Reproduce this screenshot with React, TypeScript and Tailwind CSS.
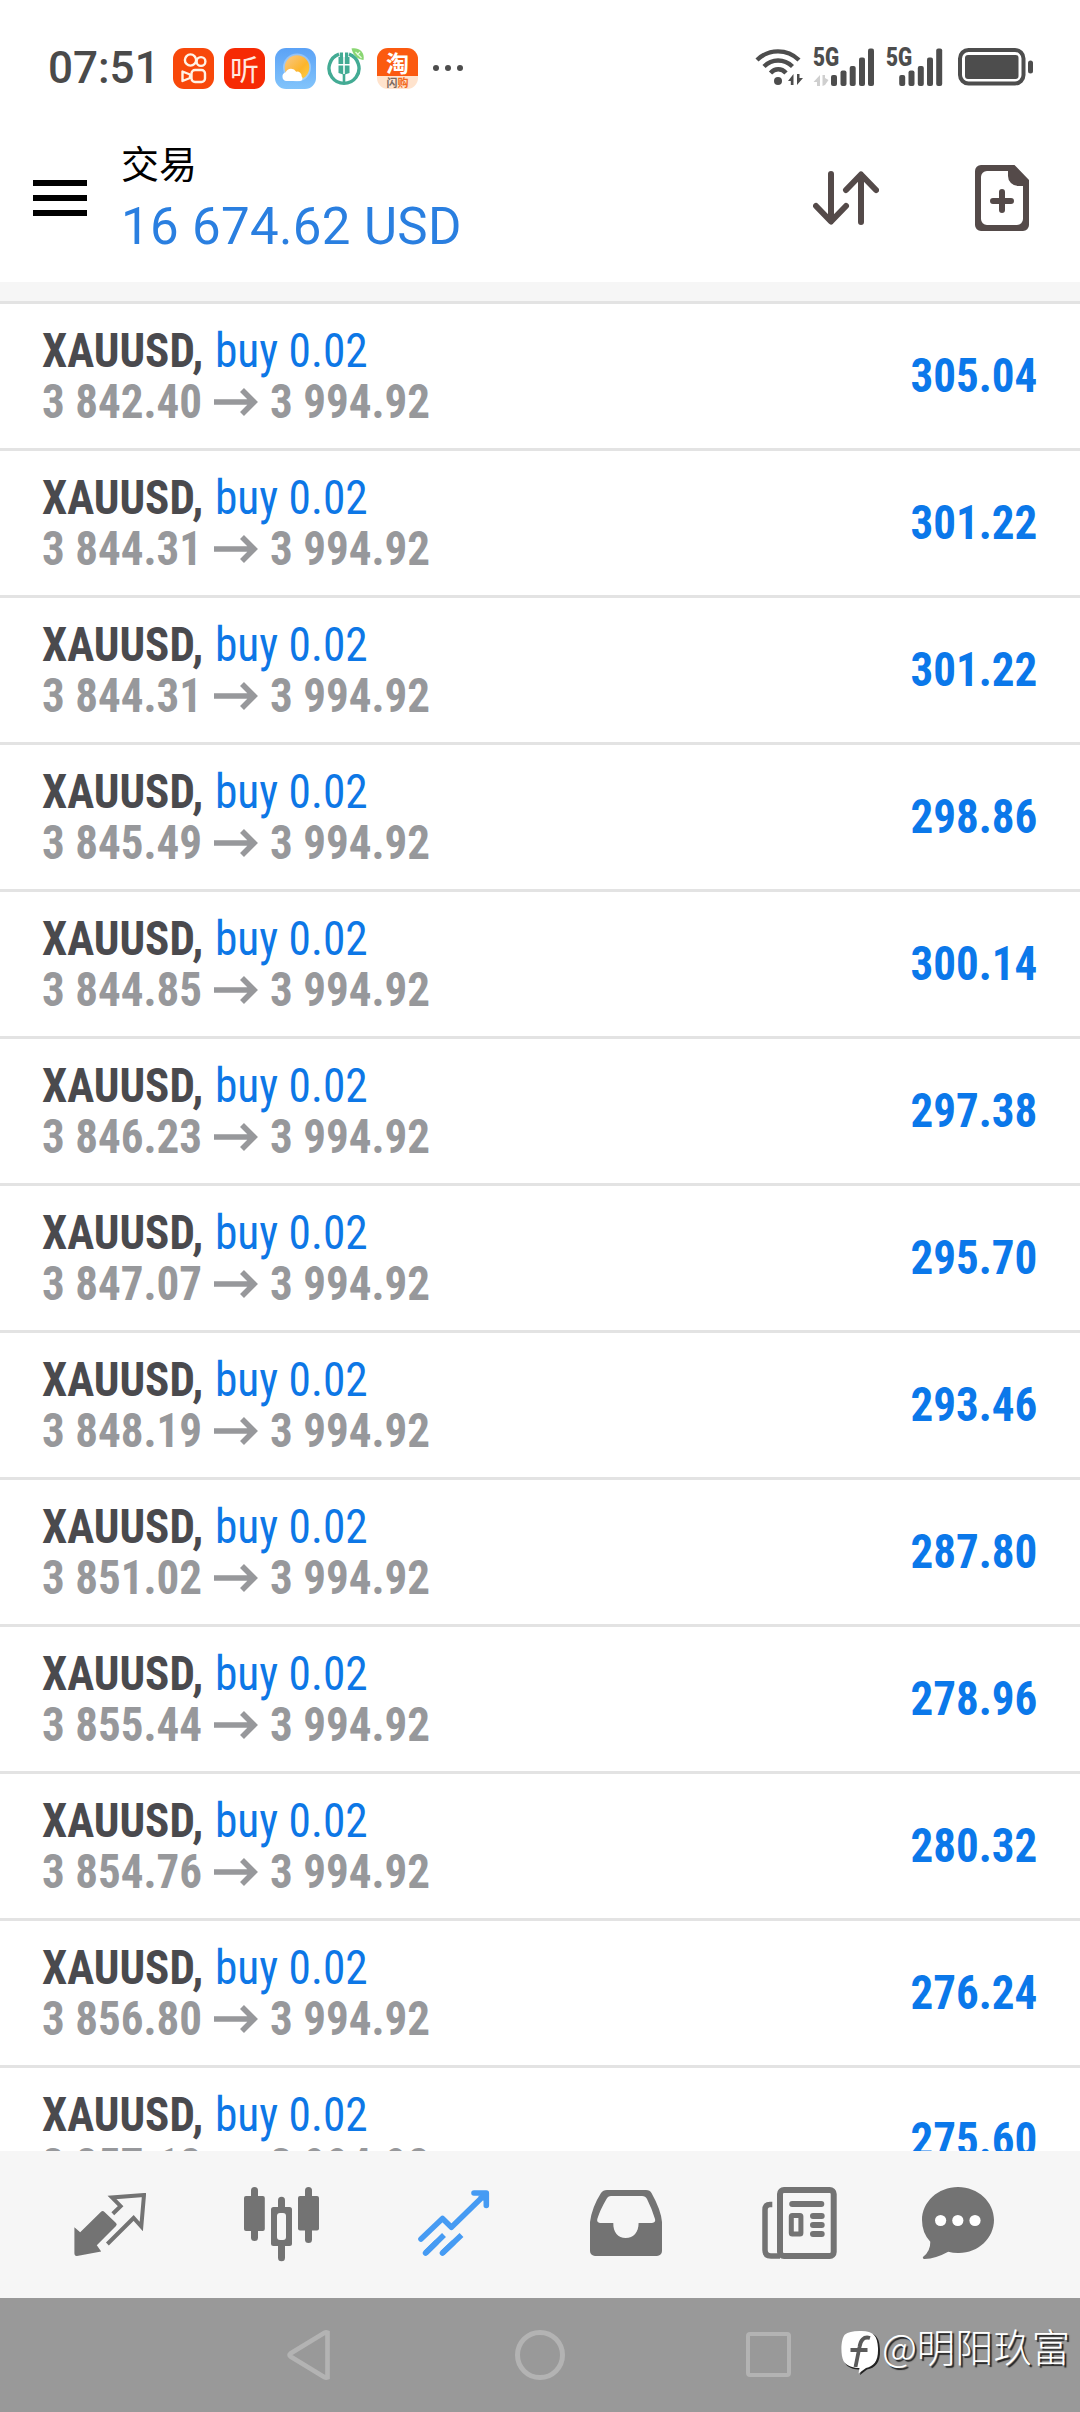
import type { ReactNode } from "react";

const positions = [
  { open: "3 842.40", profit: "305.04" },
  { open: "3 844.31", profit: "301.22" },
  { open: "3 844.31", profit: "301.22" },
  { open: "3 845.49", profit: "298.86" },
  { open: "3 844.85", profit: "300.14" },
  { open: "3 846.23", profit: "297.38" },
  { open: "3 847.07", profit: "295.70" },
  { open: "3 848.19", profit: "293.46" },
  { open: "3 851.02", profit: "287.80" },
  { open: "3 855.44", profit: "278.96" },
  { open: "3 854.76", profit: "280.32" },
  { open: "3 856.80", profit: "276.24" },
  { open: "3 857.12", profit: "275.60" },
];

function KuaishouIcon() {
  return (
    <svg width="41" height="41" viewBox="0 0 41 41" fill="none" stroke="#fff3e6" strokeWidth="2.4">
      <rect width="41" height="41" rx="11" fill="#f8480a" stroke="none" />
      <circle cx="17.5" cy="12" r="5.6" />
      <circle cx="28" cy="13.5" r="4.4" />
      <rect x="18.5" y="22" width="13.5" height="12" rx="3.5" />
      <path d="M17 26.5 L9.5 23.5 V33 L17 30 Z" strokeLinejoin="round" />
    </svg>
  );
}

function WeatherIcon() {
  return (
    <svg width="41" height="41" viewBox="0 0 41 41">
      <defs>
        <linearGradient id="sky" x1="0" y1="0" x2="0" y2="1">
          <stop offset="0" stopColor="#5ba2f6" />
          <stop offset="1" stopColor="#82c4fb" />
        </linearGradient>
        <linearGradient id="sun" x1="0" y1="0" x2="1" y2="1">
          <stop offset="0" stopColor="#f8c98c" />
          <stop offset="0.6" stopColor="#fcb52c" />
          <stop offset="1" stopColor="#fdd04a" />
        </linearGradient>
      </defs>
      <rect width="41" height="41" rx="11" fill="url(#sky)" />
      <circle cx="22" cy="19.5" r="14" fill="#fff" opacity="0.3" />
      <circle cx="22" cy="19.5" r="12.3" fill="url(#sun)" />
      <path
        d="M11.5 33 a4.5 4.5 0 0 1 -0.8 -8.8 a6 6 0 0 1 10.5 -0.5 a4.5 4.5 0 0 1 5.5 4.8 a2.6 2.6 0 0 1 -1.5 4.5 Z"
        fill="#fff"
      />
    </svg>
  );
}

function BankIcon() {
  return (
    <svg width="40" height="41" viewBox="0 0 40 41" fill="none">
      <path d="M13 6.2 A15 15 0 1 0 23 6.2" stroke="#43ab94" strokeWidth="3.4" />
      <path d="M18 26 V35" stroke="#43ab94" strokeWidth="2.6" />
      <path d="M15.4 4.5 V12 M20.6 4.5 V12" stroke="#43ab94" strokeWidth="3.2" />
      <path
        d="M12.5 9 h4.7 v7 h-4.7 z M18.8 9 h4.7 v7 h-4.7 z M12.5 17.5 h4.7 v9 l-4.7 -1.5 z M18.8 17.5 h4.7 v7.5 l-4.7 1.5 z"
        fill="#43ab94"
      />
      <path d="M25.5 0.5 C33 -1 39 4 37.5 12 C31 11 27 7 25.5 0.5 Z" fill="#8ad672" />
      <path d="M29.5 4 L35.5 10 M31 7 l3 -3" stroke="#e9fbe0" strokeWidth="1.2" />
    </svg>
  );
}

function WifiIcon() {
  return (
    <svg width="48" height="38" viewBox="0 0 48 38" fill="none" stroke="#4d4d4d" strokeWidth="4.4">
      <path d="M2 12 C14 0.5 32 0.5 44 12" />
      <path d="M9 18.5 C17 10.5 29 10.5 37.5 18.5" />
      <path d="M15.5 25 C20 20 26.5 20 31 25" />
      <circle cx="23" cy="33" r="4" fill="#4d4d4d" stroke="none" />
      <path d="M38.5 26 V37 H35.8 V33 H33 Z M42 37 V26 H44.5 V30 H48 Z" fill="#4d4d4d" stroke="none" />
    </svg>
  );
}

function SignalBars({ children }: { children?: ReactNode }) {
  return (
    <div className="relative h-[38px] w-[61px]">
      <span className="absolute -top-[4px] left-0 origin-left scale-x-[0.83] font-['Roboto'] text-[25px] leading-[28px] font-black text-[#4d4d4d]">
        5G
      </span>
      {children}
    </div>
  );
}

function BatteryIcon() {
  return (
    <svg width="76" height="38" viewBox="0 0 76 38">
      <rect x="2" y="2" width="63.5" height="33.5" rx="8.5" fill="none" stroke="#4d4d4d" strokeWidth="4" />
      <rect x="7" y="7" width="53.5" height="24" rx="3" fill="#4d4d4d" />
      <rect x="70" y="12.5" width="5" height="13" rx="2.5" fill="#4d4d4d" />
    </svg>
  );
}

function StatusBar() {
  return (
    <div className="flex h-[138px] items-start pt-[48px] pl-[48px]">
      <span className="w-[110px] pt-[1px] font-['Roboto'] text-[44px] leading-[38px] font-medium text-[#4a4a4a]">
        07:51
      </span>
      <div className="ml-[15px] flex gap-[10px]">
        <KuaishouIcon />
        <div className="flex size-[41px] items-center justify-center rounded-[11px] bg-[#f62a04] font-['Noto_Sans_CJK_SC'] text-[29px] leading-[41px] text-[#ffe9df]">
          听
        </div>
        <WeatherIcon />
        <BankIcon />
        <div className="ml-[1px] size-[41px] overflow-hidden rounded-[11px] bg-[#ffe3cd] text-center font-['Noto_Sans_CJK_SC'] font-bold">
          <div className="h-[28px] bg-[#fb5a10] text-[23px] leading-[28px] text-white">淘</div>
          <div className="text-[11px] leading-[12px] text-[#f26a1b]">
            <span className="text-[#7a6a60]">闪</span>购
          </div>
        </div>
      </div>
      <div className="mt-[17px] ml-[15px] flex gap-[6px]">
        <i className="size-[6px] rounded-full bg-[#4d4d4d]" />
        <i className="size-[6px] rounded-full bg-[#4d4d4d]" />
        <i className="size-[6px] rounded-full bg-[#4d4d4d]" />
      </div>
      <div className="mr-[46px] ml-auto flex">
        <WifiIcon />
        <div className="ml-[10px]">
          <SignalBars>
            <svg className="absolute inset-0" width="61" height="38" viewBox="0 0 61 38" fill="#4d4d4d">
              <rect x="18" y="27" width="6" height="11" rx="2" />
              <rect x="27.5" y="22.5" width="6" height="15.5" rx="2" />
              <rect x="36.7" y="18" width="6" height="20" rx="2" />
              <rect x="46" y="9.5" width="6" height="28.5" rx="2" />
              <rect x="55" y="0.5" width="6" height="37.5" rx="2" />
              <path d="M7 27 V38 H4 V34 H0.5 Z M9.5 38 V27 H12 V30 L15.5 32 L12 37 Z" fill="#cfcfcf" />
            </svg>
          </SignalBars>
        </div>
        <div className="ml-[12px]">
          <SignalBars>
            <svg className="absolute inset-0" width="61" height="38" viewBox="0 0 61 38" fill="#4d4d4d">
              <rect x="13.2" y="27" width="6" height="11" rx="2" />
              <rect x="22.5" y="22.5" width="6" height="15.5" rx="2" />
              <rect x="31.8" y="18" width="6" height="20" rx="2" />
              <rect x="41" y="9.5" width="6" height="28.5" rx="2" />
              <rect x="50.2" y="0.5" width="6" height="37.5" rx="2" />
            </svg>
          </SignalBars>
        </div>
        <div className="ml-[11px]">
          <BatteryIcon />
        </div>
      </div>
    </div>
  );
}

function Header() {
  return (
    <header className="flex h-[144px] items-start pl-[33px]">
      <div className="mt-[42px] flex w-[54px] flex-col gap-[9px]">
        <span className="h-[6px] bg-black" />
        <span className="h-[6px] bg-black" />
        <span className="h-[6px] bg-black" />
      </div>
      <div className="-mt-[3px] ml-[34px] whitespace-nowrap">
        <h1 className="h-[54px] font-['Noto_Sans_CJK_SC'] text-[38px] leading-[54px] text-black">交易</h1>
        <p className="mt-[8px] font-['Roboto'] text-[51px] leading-[60px] tracking-[0.35px] text-[#2a7fe0]">
          16 674.62 USD
        </p>
      </div>
      <svg
        className="mt-[33px] ml-auto"
        width="66"
        height="54"
        viewBox="0 0 66 54"
        fill="none"
        stroke="#544a49"
        strokeWidth="6"
        strokeLinecap="round"
        strokeLinejoin="round"
      >
        <path d="M18 3 V50 M3 35 L18 50.5 L33 35" />
        <path d="M48 51 V4 M33 19 L48 3.5 L63 19" />
      </svg>
      <svg className="mt-[27px] mr-[51px] ml-[96px]" width="54" height="66" viewBox="0 0 54 66">
        <path
          fill="#544a49"
          fillRule="evenodd"
          d="M6 0 H39.5 L54 15 V60 a6 6 0 0 1 -6 6 H6 a6 6 0 0 1 -6 -6 V6 a6 6 0 0 1 6 -6 Z M12 6 a6 6 0 0 0 -6 6 V54 a6 6 0 0 0 6 6 H42 a6 6 0 0 0 6 -6 V21 H43 A10 10 0 0 1 33 11 V6 Z"
        />
        <path d="M27 27 V45 M18 36 H36" stroke="#544a49" strokeWidth="6" strokeLinecap="round" />
      </svg>
    </header>
  );
}

function PositionRow({ open, profit }: { open: string; profit: string }) {
  return (
    <li className="flex h-[147px] shrink-0 items-center justify-between border-t-[3px] border-[#e3e3e3] pr-[43px] pl-[42px] text-[48px] whitespace-nowrap">
      <div className="leading-[51px]">
        <div className="flex h-[51px]">
          <span className="w-[173px] origin-left scale-x-[0.938] font-bold text-[#4a4a4e]">XAUUSD,</span>
          <span className="origin-left scale-x-[0.945] text-[#0d77e6]">buy 0.02</span>
        </div>
        <div className="flex h-[51px] items-center font-bold text-[#97989b]">
          <span className="w-[172px] origin-left scale-x-[0.938]">{open}</span>
          <svg width="44" height="28" viewBox="0 0 44 28" fill="none" stroke="#97989b" strokeWidth="5.6">
            <path d="M0 14 H41 M28 2 L40 14 L28 26" />
          </svg>
          <span className="ml-[12px] origin-left scale-x-[0.938]">3 994.92</span>
        </div>
      </div>
      <span className="origin-right scale-x-[0.938] font-bold text-[#0b78ea]">{profit}</span>
    </li>
  );
}

function TabBar() {
  return (
    <nav className="flex h-[147px] shrink-0 items-start bg-[#f6f6f6] pl-[74px]">
      <svg className="mt-[42px]" width="72" height="64" viewBox="0 0 72 64" fill="#737373">
        <path d="M0.4 34.3 L6.2 39.3 L26.8 19 Q28.6 17 30.5 19 L42 30 Q43.5 31.5 42 33 L22.8 52.3 L27.2 58.6 L3 62.9 Q0.4 63.2 0.4 60 Z" />
        <path
          d="M38.8 20.8 L46.6 13.2 L38 4.5 L70 2 L67.3 33.5 L59.6 25 L33.4 51"
          fill="none"
          stroke="#737373"
          strokeWidth="4"
        />
      </svg>
      <svg className="mt-[36px] ml-[98px]" width="75" height="75" viewBox="0 0 75 75" fill="#737373">
        <rect y="9" width="20.8" height="35" rx="2" />
        <rect x="7" width="7" height="54" rx="3.5" />
        <rect x="27" y="20" width="21" height="39" rx="2.5" />
        <rect x="34" y="9.7" width="7" height="64.5" rx="3.5" />
        <rect x="33" y="26" width="9" height="27" rx="3" fill="#f6f6f6" />
        <rect x="54" y="9" width="21" height="34.5" rx="2" />
        <rect x="61" width="7" height="56" rx="3.5" />
      </svg>
      <svg
        className="mt-[39px] ml-[99px]"
        width="72"
        height="67"
        viewBox="0 0 72 67"
        fill="none"
        stroke="#469bf3"
        strokeWidth="5.6"
        strokeLinecap="round"
        strokeLinejoin="round"
      >
        <path d="M3 49 L24.5 28.5 L33.4 37.2 L67 4.5" />
        <path d="M56 3 H68.3 V15.5" />
        <path d="M60 6 L66 4 L66 11 Z" fill="#469bf3" stroke="none" />
        <path d="M7.6 63 L18 52.8 M24.5 63 L35 53" />
        <path d="M7.6 63 L26 45 M24.5 63 L43.5 45" strokeLinecap="butt" />
      </svg>
      <svg className="mt-[39px] ml-[100px]" width="73" height="66" viewBox="0 0 73 66" fill="#737373">
        <path
          fillRule="evenodd"
          d="M17 0 H56 Q60 0 61.5 3 Q71 20 72 32 V61 a5 5 0 0 1 -5 5 H5 a5 5 0 0 1 -5 -5 V32 Q2 17 11 3 Q13 0 17 0 Z M21 6 Q18 6 16.5 9 Q10 20 7.3 29 Q6.5 32.5 10 33 H23.3 C23 42 28 48 35.7 48 C43.5 48 48.7 42 48.6 33 H62 Q66 32.5 65 29 Q62 19 57 9 Q55.5 6 52 6 Z"
        />
      </svg>
      <svg className="mt-[36px] ml-[99px]" width="75" height="72" viewBox="0 0 75 72" fill="none" stroke="#737373">
        <rect x="18" y="3" width="53.7" height="66" rx="4" strokeWidth="6" />
        <path d="M10.3 17.5 H8 Q3 17.5 3 23 V63 Q3 69 9 69 H18" strokeWidth="5.5" />
        <path d="M30.2 17 H59.3 M51 29 H59.7 M51 38 H59.7 M51 47 H59.7" strokeWidth="6" strokeLinecap="round" />
        <rect x="29.3" y="28.5" width="9.6" height="18.5" rx="1" strokeWidth="5" />
      </svg>
      <svg className="mt-[36px] ml-[85px]" width="72" height="73" viewBox="0 0 72 73" fill="#737373">
        <path d="M36 0 C56 0 72 15 72 33 C72 51 56 66.5 36 66 Q31 66 26.2 64.7 Q14 71.5 2.5 72 Q0 71.5 1.2 69.8 Q8.5 64 8.3 54.7 Q0 46 0 33 C0 15 16 0 36 0 Z" />
        <circle cx="18.6" cy="33.5" r="5.6" fill="#fff" />
        <circle cx="35.8" cy="33.5" r="5.6" fill="#fff" />
        <circle cx="53" cy="33.5" r="5.6" fill="#fff" />
      </svg>
    </nav>
  );
}

function SystemNav() {
  return (
    <div className="flex h-[114px] shrink-0 items-start bg-[#999999] pl-[287px]">
      <svg className="mt-[32px]" width="44" height="50" viewBox="0 0 44 50" fill="none" stroke="#b3b3b3" strokeWidth="4.6">
        <path d="M40.5 2.6 V47.4 Q39 48 37.5 47.2 L3.5 26.5 Q1.5 25 3.5 23.5 L37.5 2.8 Q39 2 40.5 2.6 Z" />
      </svg>
      <div className="mt-[32px] ml-[184px] size-[50px] rounded-full border-[5px] border-[#b3b3b3]" />
      <div className="mt-[34px] ml-[181px] size-[45px] rounded-[4px] border-[4.5px] border-[#b3b3b3]" />
      <svg className="mt-[32px] ml-[50px]" width="40" height="46" viewBox="0 0 40 46">
        <path
          d="M20 2.5 C34 2 38.5 6 39 20 C39.5 33 34 38 26 39.5 L19 45 L20 39.5 C6 39.5 2 34 2 21 C2 7 7 3 20 2.5 Z"
          fill="#222"
        />
        <path
          d="M18.5 1 C32 0.5 36.5 5 37 18 C37.5 31 33 36 25 38 L17.5 43.5 L18.5 38 C14 38.5 5 36 2.5 31 C-0.5 25 -0.5 9 4 4.5 Q8 1 18.5 1 Z"
          fill="#fff"
        />
        <path
          d="M29 8 C22.5 6 19.5 10.5 18.5 17 L14.5 37 M9.5 20 H26.5"
          fill="none"
          stroke="#5a5a5a"
          strokeWidth="3.8"
        />
      </svg>
      <span className="mt-[18px] ml-[1px] font-['Noto_Sans_CJK_SC'] text-[38.3px] leading-[60px] font-light whitespace-nowrap text-white [text-shadow:2px_2px_1px_#222]">
        @明阳玖富
      </span>
    </div>
  );
}

export default function App() {
  return (
    <div className="flex h-[2412px] w-[1080px] flex-col overflow-hidden bg-white font-['Roboto',sans-serif]">
      <StatusBar />
      <Header />
      <div className="h-[19px] shrink-0 bg-[#f6f6f6]" />
      <ul className="flex min-h-0 flex-1 flex-col overflow-hidden [font-stretch:75%]">
        {positions.map((p, i) => (
          <PositionRow key={i} open={p.open} profit={p.profit} />
        ))}
      </ul>
      <TabBar />
      <SystemNav />
    </div>
  );
}
